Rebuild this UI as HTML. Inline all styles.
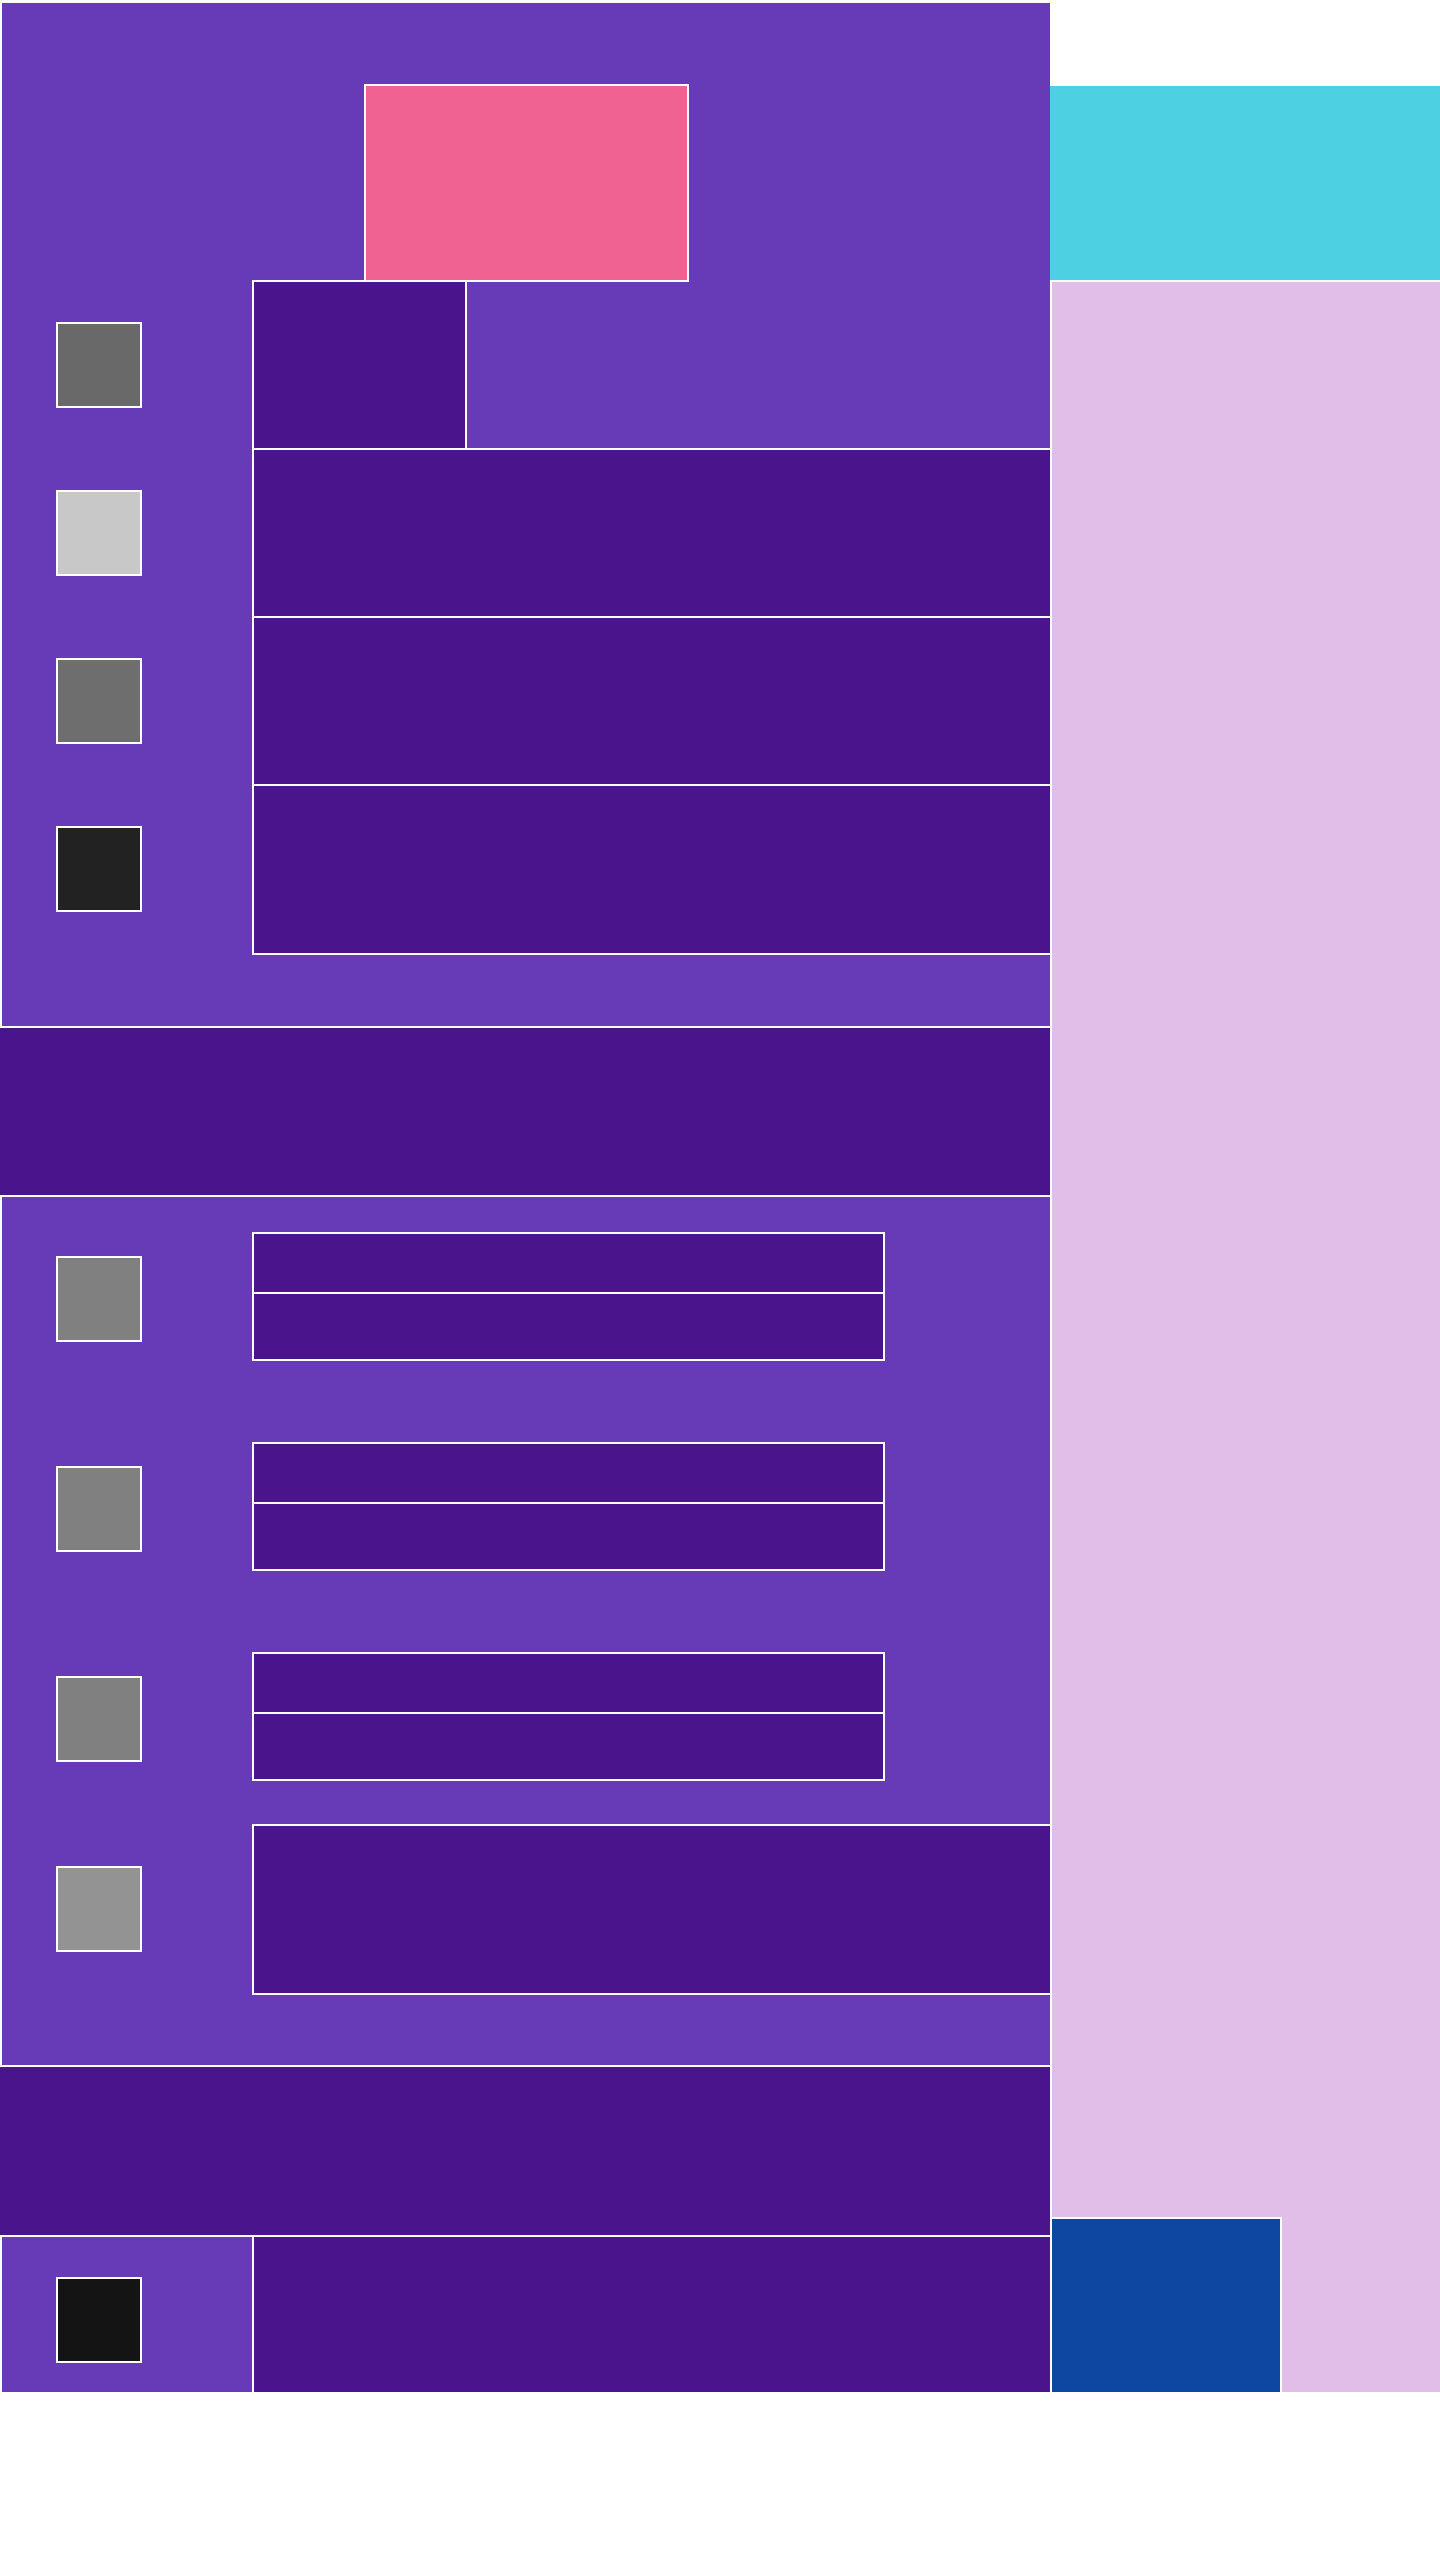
<!DOCTYPE html>
<html><head><style>
html,body{margin:0;padding:0;background:#fff;width:1440px;height:2560px;overflow:hidden;position:relative}
div{position:absolute;box-sizing:border-box}
.p{background:#673ab7}
.d{background:#4a148c;border:2px solid #fff}
.s{border:2px solid #fff;width:86px;height:86px;left:56px}
</style></head><body>
<div class="p" style="left:2px;top:3px;width:1048px;height:1024px"></div>
<div style="left:364px;top:84px;width:325px;height:198px;background:#f06292;border:2px solid #fff"></div>
<div style="left:1050px;top:86px;width:390px;height:196px;background:#4dd0e1;border-bottom:2px solid #fff"></div>
<div style="left:1050px;top:282px;width:390px;height:2110px;background:#e1bee7;border-left:2px solid #fff"></div>
<div class="d" style="left:252px;top:280px;width:215px;height:171px"></div>
<div class="d" style="left:252px;top:448px;width:800px;height:171px"></div>
<div class="d" style="left:252px;top:616px;width:800px;height:171px"></div>
<div class="d" style="left:252px;top:784px;width:800px;height:171px"></div>
<div class="s" style="top:322px;background:#696969"></div>
<div class="s" style="top:490px;background:#c8c8c8"></div>
<div class="s" style="top:658px;background:#6e6e6e"></div>
<div class="s" style="top:826px;background:#222"></div>
<div class="d" style="left:0;top:1026px;width:1052px;height:171px;border-left:none"></div>
<div class="p" style="left:2px;top:1197px;width:1048px;height:870px"></div>
<div class="d" style="left:252px;top:1232px;width:633px;height:63px"></div>
<div class="d" style="left:252px;top:1292px;width:633px;height:69px"></div>
<div class="d" style="left:252px;top:1442px;width:633px;height:63px"></div>
<div class="d" style="left:252px;top:1502px;width:633px;height:69px"></div>
<div class="d" style="left:252px;top:1652px;width:633px;height:63px"></div>
<div class="d" style="left:252px;top:1712px;width:633px;height:69px"></div>
<div class="d" style="left:252px;top:1824px;width:800px;height:171px"></div>
<div class="s" style="top:1256px;background:#808080"></div>
<div class="s" style="top:1466px;background:#808080"></div>
<div class="s" style="top:1676px;background:#808080"></div>
<div class="s" style="top:1866px;background:#939393"></div>
<div class="d" style="left:0;top:2065px;width:1052px;height:172px;border-left:none"></div>
<div class="p" style="left:2px;top:2237px;width:250px;height:155px"></div>
<div style="left:252px;top:2235px;width:800px;height:157px;background:#4a148c;border-left:2px solid #fff;border-right:2px solid #fff;border-top:2px solid #fff"></div>
<div class="s" style="top:2277px;background:#141414"></div>
<div style="left:1050px;top:2217px;width:232px;height:175px;background:#0d47a1;border:2px solid #fff;border-bottom:none"></div>
</body></html>
